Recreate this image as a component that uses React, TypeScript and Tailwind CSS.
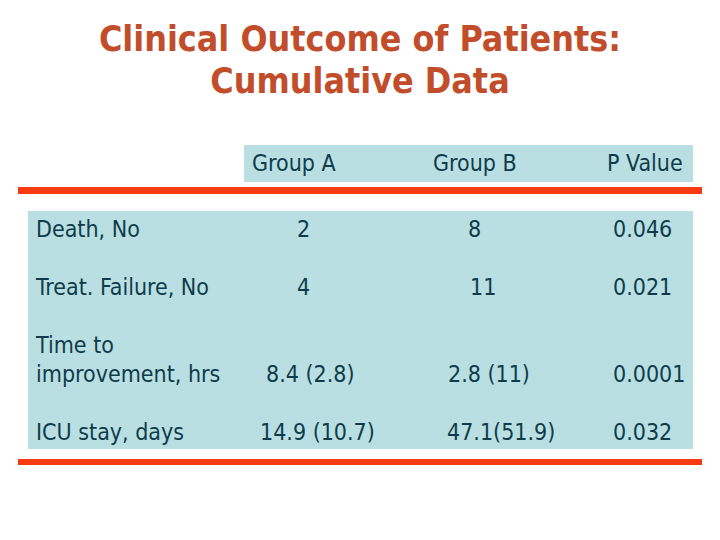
const rows = [
  { label: ["Death, No"], a: "2", aPad: "pl-[53px]", b: "8", bPad: "pl-[48px]", p: "0.046" },
  { label: ["Treat. Failure, No"], a: "4", aPad: "pl-[53px]", b: "11", bPad: "pl-[50px]", p: "0.021" },
  { label: ["Time to", "improvement, hrs"], a: "8.4 (2.8)", aPad: "pl-[22px]", b: "2.8 (11)", bPad: "pl-[28px]", p: "0.0001" },
  { label: ["ICU stay, days"], a: "14.9 (10.7)", aPad: "pl-[16px]", b: "47.1(51.9)", bPad: "pl-[27px]", p: "0.032" },
]

export default function App() {
  return (
    <div className="w-[720px] h-[540px] bg-white font-['DejaVu_Sans_Condensed','DejaVu_Sans',sans-serif] [font-stretch:condensed] text-[#0f3c4a] overflow-hidden">
      <h1 className="pt-[18px] text-center font-bold text-[35.5px] leading-[42px] text-[#c14d2a]">
        Clinical Outcome of Patients:
        <br />
        Cumulative Data
      </h1>

      <div className="mt-[43px] ml-[244px] w-[449px] h-[37px] bg-[#b9dfe3] grid grid-cols-[176px_170px_1fr] items-center text-[23px] leading-[29px]">
        <span className="pl-[8px]">Group A</span>
        <span className="pl-[13px]">Group B</span>
        <span className="pl-[17px]">P Value</span>
      </div>

      <div className="mt-[5px] ml-[18px] w-[684px] h-[7px] bg-[#f83a10]" />

      <div className="mt-[17px] ml-[28px] w-[665px] bg-[#b9dfe3] pt-[4px] pb-[2px] flex flex-col gap-[29px] text-[23px] leading-[29px]">
        {rows.map((r) => (
          <div key={r.p} className="grid grid-cols-[216px_176px_170px_1fr] items-end">
            <div className="pl-[8px] whitespace-nowrap">
              {r.label.map((l) => (
                <div key={l}>{l}</div>
              ))}
            </div>
            <div className={r.aPad + " whitespace-nowrap"}>{r.a}</div>
            <div className={r.bPad + " whitespace-nowrap"}>{r.b}</div>
            <div className="pl-[23px]">{r.p}</div>
          </div>
        ))}
      </div>

      <div className="mt-[10px] ml-[18px] w-[684px] h-[6px] bg-[#f83a10]" />
    </div>
  )
}
